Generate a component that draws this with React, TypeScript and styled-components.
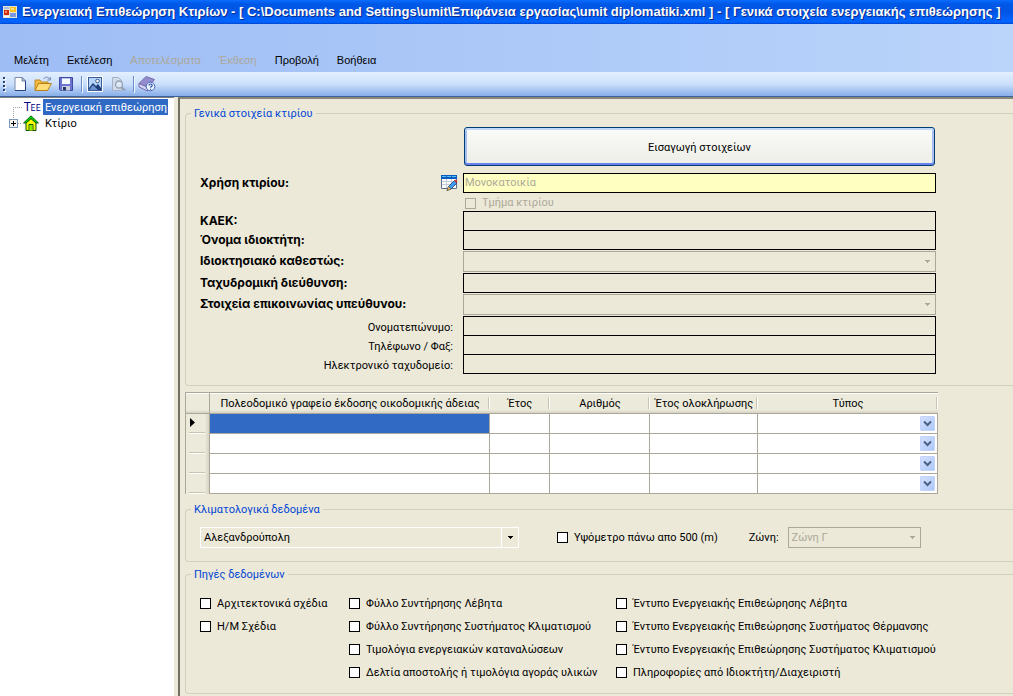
import React from "react";
import styled, { createGlobalStyle, css } from "styled-components";

const uiFont = `Roboto, "Liberation Sans", sans-serif`;
const menuFont = `"Liberation Sans", Arial, sans-serif`;

const Global = createGlobalStyle`
  * { box-sizing: border-box; }
  html, body, #root { height: 100%; }
  body {
    margin: 0;
    background: #ece9d8;
    color: #000;
    font: 11px/14px ${uiFont};
    overflow: hidden;
  }
  button, input, select { font: inherit; color: inherit; }
`;

const Window = styled.div`
  min-height: 100%;
  display: flex;
  flex-direction: column;
`;

const TitleBar = styled.header`
  height: 24px;
  flex: none;
  display: flex;
  align-items: center;
  gap: 4px;
  padding-left: 2px;
  background: linear-gradient(#0a6cff 0, #0058e6 4px, #0055e5 12px, #0262fb 19px, #0264ff 22px, #0046d0 24px);
  overflow: hidden;
`;

const Title = styled.h1`
  margin: 0;
  font: bold 13px/20px ${menuFont};
  color: #fff;
  text-shadow: 1px 1px #0a2a8c;
  white-space: pre;
`;

const MenuBar = styled.nav`
  height: 48px;
  flex: none;
  display: flex;
  align-items: flex-end;
  gap: 18px;
  padding: 0 14px 4px;
  background: linear-gradient(90deg, #9ebdf5, #bad4fa);
`;

const MenuItem = styled.button`
  padding: 0;
  border: 0;
  background: none;
  font: 11px/16px ${menuFont};
  white-space: nowrap;
  &:disabled { color: #aca899; }
`;

const ToolBar = styled.div`
  height: 25px;
  flex: none;
  display: flex;
  align-items: center;
  padding-left: 3px;
  border-bottom: 1px solid #3b619c;
  background: linear-gradient(#e3effe 0, #cbe0fc 12px, #8db2ea 23px);
`;

const Tool = styled.button`
  width: 23px;
  height: 22px;
  padding: 0;
  border: 0;
  background: none;
  display: grid;
  place-items: center;
`;

const Divider = styled.span`
  width: 1px;
  height: 16px;
  margin: 0 1px 0 4px;
  background: #6a8ccb;
  box-shadow: 1px 1px #f1f9ff;
`;

const Body = styled.div`
  flex: 1;
  display: flex;
  min-height: 0;
`;

const Sidebar = styled.aside`
  width: 174px;
  flex: none;
  padding: 1px 0 0 8px;
  background: #fff;
  border-top: 1px solid #808080;
`;

const Tree = styled.ul`
  margin: 0;
  padding: 0;
  list-style: none;
`;

const TreeRow = styled.li`
  height: 16px;
  display: flex;
  align-items: center;
`;

const TreeLabel = styled.span<{ $selected?: boolean }>`
  padding: 2px 1px 0 2px;
  font: 11px/14px ${uiFont};
  white-space: nowrap;
  ${(p) => p.$selected && css`background: #316ac5; color: #fff;`}
`;

const Content = styled.main`
  flex: 1;
  min-width: 0;
  margin-left: 4px;
  padding: 7px 0 0 5px;
  border: solid #716f64;
  border-width: 2px 0 0 2px;
  border-top-color: #8a8778;
`;

const Group = styled.fieldset`
  min-width: 0;
  margin: 0;
  padding: 0 77px 0 14px;
  border: 1px solid #d0d0bf;
  border-right: 0;
  border-radius: 4px 0 0 4px;
`;

const Legend = styled.legend`
  margin-left: -9px;
  padding: 0 3px;
  color: #0046d5;
  line-height: 15px;
`;

const Form = styled.div`
  height: 264px;
  padding-top: 6px;
  display: flex;
  flex-direction: column;
`;

const Row = styled.div<{ $h: number }>`
  height: ${(p) => p.$h}px;
  flex: none;
  display: grid;
  grid-template-columns: 263px minmax(0, 1fr);
  align-items: start;
`;

const Caption = styled.label`
  display: flex;
  align-items: center;
  justify-content: space-between;
  padding-right: 5px;
  font: bold 12px/20px Inter, "Noto Sans", sans-serif;
  white-space: nowrap;
`;

const SubCaption = styled.label`
  padding-right: 10px;
  line-height: 24px;
  text-align: right;
  white-space: nowrap;
`;

const BigButton = styled.button`
  height: 39px;
  margin: 0 1px;
  padding: 2px 0 0;
  border: 1px solid #003c74;
  border-radius: 3px;
  background: linear-gradient(#fbfbf9, #eceee6);
  box-shadow: inset 0 2px #c2d8f8, inset 0 -2px #6982ee, inset 2px 0 #a5c0f0, inset -2px 0 #a5c0f0;
`;

const TextBox = styled.input<{ $filled?: boolean }>`
  width: 100%;
  height: 20px;
  padding: 0 1px 1px;
  border: 1px solid #000;
  border-radius: 0;
  background: ${(p) => (p.$filled ? "#ffffc1" : "#ece9d8")};
  color: #aca899;
`;

const Check = styled.label<{ $disabled?: boolean }>`
  display: flex;
  align-items: center;
  gap: 6px;
  white-space: nowrap;
  color: ${(p) => (p.$disabled ? "#aca899" : "#000")};
  padding-left: ${(p) => (p.$disabled ? 2 : 0)}px;
`;

const Box = styled.input`
  appearance: none;
  width: 11px;
  height: 11px;
  margin: 0;
  border: 1px solid #000;
  background: #fff;
  &:disabled { border-color: #aca899; background: #ece9d8; }
  &:checked { background: #316ac5; }
`;

const SelectWrap = styled.div`
  position: relative;
  height: 21px;
  svg {
    position: absolute;
    top: 9px;
    right: 6px;
    pointer-events: none;
  }
`;

const Select = styled.select<{ $light?: boolean }>`
  appearance: none;
  width: 100%;
  height: 21px;
  padding: 0 20px 0 3px;
  border: 1px solid ${(p) => (p.$light ? "#fff" : "#aca899")};
  border-radius: 0;
  background: ${(p) =>
    p.$light ? "linear-gradient(#fff, #fff) right 16px top / 1px 100% no-repeat #ece9d8" : "#ece9d8"};
  opacity: 1;
  &:disabled { color: #aca899; }
`;

const Arrow = ({ color }: { color: string }) => (
  <svg width="5" height="3" viewBox="0 0 5 3" shapeRendering="crispEdges">
    <path d="M0 0h5v1h-1v1h-1v1h-1v-1h-1v-1h-1z" fill={color} />
  </svg>
);

const Grid = styled.table`
  width: calc(100% - 75px);
  margin: 6px 0 8px;
  table-layout: fixed;
  border-collapse: separate;
  border-spacing: 0;
  border: solid #aca899;
  border-width: 1px 0 0 1px;
`;

const Head = styled.th`
  position: relative;
  height: 21px;
  padding: 2px 0 0;
  font-weight: normal;
  border-bottom: 1px solid #aca899;
  background: linear-gradient(#fff 0 1px, #ebeadb 1px 17px, #d6d2c2 20px);
  &:first-child { border-right: 1px solid #aca899; }
  &:not(:first-child)::after {
    content: "";
    position: absolute;
    top: 4px;
    right: 0;
    width: 2px;
    height: 12px;
    background: linear-gradient(90deg, #c7c5b2 50%, #fff 50%);
  }
`;

const RowHead = styled.th`
  height: 20px;
  padding: 4px 0 0 4px;
  vertical-align: top;
  text-align: left;
  border-right: 1px solid #aca899;
  background:
    linear-gradient(#c7c5b2 50%, #fff 50%) 3px 100% / 16px 2px no-repeat,
    linear-gradient(90deg, #ebeadb 19px, #d6d2c2 23px);
  svg { display: block; }
`;

const Cell = styled.td<{ $selected?: boolean }>`
  height: 20px;
  padding: 0 2px 0 0;
  border: solid #aca899;
  border-width: 0 1px 1px 0;
  background: ${(p) => (p.$selected ? "#316ac5" : "#fff")};
`;

const DropButton = styled.button`
  display: grid;
  place-items: center;
  width: 15px;
  height: 15px;
  margin-left: auto;
  padding: 0;
  border: 1px solid #c3d3fd;
  border-radius: 1px;
  background: linear-gradient(135deg, #d3e0fe, #aec8f7);
`;

const Climate = styled.div`
  height: 44px;
  padding-top: 10px;
  display: flex;
  align-items: flex-start;
  & > :first-child { width: 319px; }
  & > :nth-child(2) { margin-left: 38px; height: 21px; }
`;

const Zone = styled.label`
  display: flex;
  align-items: center;
  gap: 9px;
  margin-left: 31px;
  & > div { width: 133px; }
`;

const Sources = styled.div`
  height: 111px;
  padding-top: 10px;
  display: grid;
  grid-template-columns: 149px 267px max-content;
  grid-auto-rows: 23px;
  align-items: center;
`;

const Item = styled(Check)<{ $col: number; $row: number }>`
  grid-column: ${(p) => p.$col};
  grid-row: ${(p) => p.$row};
`;

const Spacer = styled.div`
  height: 5px;
`;

const AppIcon = () => (
  <svg width="16" height="16" viewBox="0 0 16 16" shapeRendering="crispEdges">
    <rect x="1" y="2" width="14" height="12" fill="#e8e4d4" />
    <rect x="2" y="3" width="5" height="2" fill="#a8bce8" />
    <rect x="2" y="6" width="5" height="5" fill="#d02c10" />
    <rect x="3" y="7" width="2" height="2" fill="#f88c60" />
    <rect x="8" y="3" width="6" height="5" fill="#f8c020" />
    <rect x="9" y="4" width="3" height="2" fill="#ffe480" />
    <rect x="8" y="9" width="6" height="4" fill="#7898e0" />
    <rect x="2" y="12" width="5" height="1" fill="#fff" />
  </svg>
);

const Grip = () => (
  <svg width="5" height="16" viewBox="0 0 5 16" shapeRendering="crispEdges">
    {[1, 5, 9, 13].map((y) => (
      <g key={y}>
        <rect x="1" y={y + 1} width="2" height="2" fill="#fff" />
        <rect x="0" y={y} width="2" height="2" fill="#274176" />
      </g>
    ))}
  </svg>
);

const NewIcon = () => (
  <svg width="16" height="16" viewBox="0 0 16 16">
    <path d="M3 1.500h7l3.500 3.500v9.500h-10.500z" fill="#fff" stroke="#7c8cac" />
    <path d="M3 14.500h10.500v-9.500" fill="none" stroke="#27417c" />
    <path d="M10 1.500v3.500h3.500z" fill="#d4def0" stroke="#4c6090" strokeWidth="0.800" />
  </svg>
);

const OpenIcon = () => (
  <svg width="18" height="16" viewBox="0 0 18 16">
    <path d="M1 14v-10h5l1.500 2h6.500v8z" fill="#f0b840" stroke="#c08c28" />
    <path d="M1 14.500l3.500-7h13l-4 7z" fill="#ffdc78" stroke="#b88018" />
    <path d="M9.500 3c2-2.500 4.500-2.500 6 0m.800-2v3h-3" fill="none" stroke="#6c84ac" />
  </svg>
);

const SaveIcon = () => (
  <svg width="16" height="16" viewBox="0 0 16 16">
    <path d="M1.500 1.500h13v13h-12l-1-1z" fill="#6c74d0" stroke="#4048a0" />
    <rect x="4" y="2" width="8" height="6" fill="#f4f8ff" />
    <rect x="4" y="2" width="8" height="1" fill="#b8c4f0" />
    <rect x="4" y="10" width="8" height="4.500" fill="#c8d0e0" />
    <rect x="5" y="11" width="3" height="3.500" fill="#283468" />
  </svg>
);

const ImageIcon = () => (
  <svg width="16" height="16" viewBox="0 0 16 16">
    <rect width="16" height="16" fill="#fff" />
    <rect x="1.500" y="1.500" width="13" height="13" fill="#b4d4f8" stroke="#3c5c94" />
    <path d="M2 12l4-5 3 3 2-2 3 4v2h-12z" fill="#1c3c78" />
    <path d="M2 14l4-5 5 5z" fill="#6c94d0" />
    <circle cx="10.500" cy="5" r="1.800" fill="#fff" stroke="#1c3c78" strokeWidth="0.800" />
  </svg>
);

const PreviewIcon = () => (
  <svg width="16" height="16" viewBox="0 0 16 16">
    <path d="M2.500 1.500h6l3 3v10h-9z" fill="#d0dcec" stroke="#a4b0c4" />
    <circle cx="9" cy="8.500" r="3.500" fill="#dce8f4" stroke="#94a0b4" strokeWidth="1.300" />
    <path d="M11.500 11l3.500 3.500" stroke="#94a0b4" strokeWidth="2" />
  </svg>
);

const HelpIcon = () => (
  <svg width="18" height="16" viewBox="0 0 18 16">
    <path d="M1 7.500l7-7 8.500 3-6 8z" fill="#948ccc" stroke="#746cb0" />
    <path d="M1 7.500v3.500l8.500 4 1-3.500z" fill="#d4d0f0" stroke="#746cb0" />
    <circle cx="12.500" cy="10.500" r="4.300" fill="#eef4ff" stroke="#4468b8" />
    <path d="M11 9.500c0-2 3.200-2 3.200 0 0 1.200-1.600 1-1.600 2.200m0 1v1" fill="none" stroke="#2448a0" strokeWidth="1.200" />
  </svg>
);

const TableEditIcon = () => (
  <svg width="17" height="16" viewBox="0 0 17 16">
    <path d="M.5 1v12.500h15v-12.500" fill="#fff" stroke="#5c7090" />
    <path d="M1 6.500h14M1 9.500h14M5.500 4v9M10.500 4v9" stroke="#c4ccd8" />
    <rect y="0" width="16" height="4" fill="#0c5cc4" />
    <path d="M1 1.500h4M6 1.500h4M11 1.500h4" stroke="#5cc0fc" />
    <path d="M6 15.500l1.500-4 6-6 2.500 2.500-6 6z" fill="#3c9cf0" stroke="#1c3c7c" strokeWidth="0.800" />
    <path d="M13.200 5.500l1.300-1 2 2-1.200 1.500z" fill="#e42c1c" />
    <path d="M6 15.500l1.500-4 2.500 2.500z" fill="#f0c878" stroke="#7c5820" strokeWidth="0.600" />
  </svg>
);

const RootLines = () => (
  <svg width="14" height="16" viewBox="0 0 14 16" shapeRendering="crispEdges">
    <path d="M5.500 8v8M5 8.500h9" fill="none" stroke="#a0a0a0" strokeDasharray="1 1" />
  </svg>
);

const NodeLines = () => (
  <svg width="14" height="16" viewBox="0 0 14 16" shapeRendering="crispEdges">
    <path d="M5.500 0v4M10 8.500h4" fill="none" stroke="#a0a0a0" strokeDasharray="1 1" />
    <rect x="1.500" y="4.500" width="8" height="8" fill="#f4f3ee" stroke="#7898b5" />
    <path d="M3 8.500h5M5.500 6v5" stroke="#000" />
  </svg>
);

const TeeMark = styled.span`
  width: 21px;
  padding-left: 2px;
  font: 12px/16px "Liberation Sans Narrow", "DejaVu Sans Condensed", sans-serif;
  color: #000080;
  small { font-size: 9px; }
`;

const HouseIcon = () => (
  <svg width="21" height="16" viewBox="0 0 21 16">
    <path d="M4 8l5-4.500 5 4.500v7.500h-10z" fill="#ffff00" stroke="#005000" />
    <path d="M9 .8l7.500 7.200h-2.500l-5-4.500-5 4.500h-2.500z" fill="#00e000" stroke="#004000" strokeWidth="0.800" />
    <path d="M7 15.500v-6h4v6" fill="#ffff00" stroke="#006000" />
    <path d="M9 10v5" stroke="#00e000" />
  </svg>
);

const RowMarker = () => (
  <svg width="5" height="9" viewBox="0 0 5 9">
    <path d="M0 0l5 4.500-5 4.500z" />
  </svg>
);

const Chevron = () => (
  <svg width="9" height="7" viewBox="0 0 9 7">
    <path d="M1 1.500l3.500 3.500 3.500-3.500" fill="none" stroke="#4d6185" strokeWidth="2" />
  </svg>
);

const sources: [number, number, string][] = [
  [1, 1, "Αρχιτεκτονικά σχέδια"],
  [1, 2, "Η/Μ Σχέδια"],
  [2, 1, "Φύλλο Συντήρησης Λέβητα"],
  [2, 2, "Φύλλο Συντήρησης Συστήματος Κλιματισμού"],
  [2, 3, "Τιμολόγια ενεργειακών καταναλώσεων"],
  [2, 4, "Δελτία αποστολής ή τιμολόγια αγοράς υλικών"],
  [3, 1, "Έντυπο Ενεργειακής Επιθεώρησης Λέβητα"],
  [3, 2, "Έντυπο Ενεργειακής Επιθεώρησης Συστήματος Θέρμανσης"],
  [3, 3, "Έντυπο Ενεργειακής Επιθεώρησης Συστήματος Κλιματισμού"],
  [3, 4, "Πληροφορίες από Ιδιοκτήτη/Διαχειριστή"],
];

export default function App() {
  return (
    <Window>
      <Global />
      <TitleBar>
        <AppIcon />
        <Title>
          {"Ενεργειακή Επιθεώρηση Κτιρίων - [ C:\\Documents and Settings\\umit\\Επιφάνεια εργασίας\\umit diplomatiki.xml ] - [ Γενικά στοιχεία ενεργειακής επιθεώρησης ]"}
        </Title>
      </TitleBar>
      <MenuBar>
        <MenuItem>Μελέτη</MenuItem>
        <MenuItem>Εκτέλεση</MenuItem>
        <MenuItem disabled>Αποτελέσματα</MenuItem>
        <MenuItem disabled>Έκθεση</MenuItem>
        <MenuItem>Προβολή</MenuItem>
        <MenuItem>Βοήθεια</MenuItem>
      </MenuBar>
      <ToolBar>
        <Grip />
        <Tool aria-label="Νέο"><NewIcon /></Tool>
        <Tool aria-label="Άνοιγμα"><OpenIcon /></Tool>
        <Tool aria-label="Αποθήκευση"><SaveIcon /></Tool>
        <Divider />
        <Tool aria-label="Εικόνα"><ImageIcon /></Tool>
        <Tool aria-label="Προεπισκόπηση" disabled><PreviewIcon /></Tool>
        <Divider />
        <Tool aria-label="Βοήθεια"><HelpIcon /></Tool>
      </ToolBar>
      <Body>
        <Sidebar>
          <Tree>
            <TreeRow>
              <RootLines />
              <TeeMark>T<small>EE</small></TeeMark>
              <TreeLabel $selected>Ενεργειακή επιθεώρηση</TreeLabel>
            </TreeRow>
            <TreeRow>
              <NodeLines />
              <HouseIcon />
              <TreeLabel>Κτίριο</TreeLabel>
            </TreeRow>
          </Tree>
        </Sidebar>
        <Content>
          <Group>
            <Legend>Γενικά στοιχεία κτιρίου</Legend>
            <Form>
              <Row $h={46}>
                <span />
                <BigButton>Εισαγωγή στοιχείων</BigButton>
              </Row>
              <Row $h={23}>
                <Caption htmlFor="use">Χρήση κτιρίου:<TableEditIcon /></Caption>
                <TextBox id="use" $filled disabled defaultValue="Μονοκατοικία" />
              </Row>
              <Row $h={15}>
                <span />
                <Check $disabled><Box type="checkbox" disabled />Τμήμα κτιρίου</Check>
              </Row>
              <Row $h={19}>
                <Caption htmlFor="kaek">ΚΑΕΚ:</Caption>
                <TextBox id="kaek" disabled />
              </Row>
              <Row $h={21}>
                <Caption htmlFor="owner">Όνομα ιδιοκτήτη:</Caption>
                <TextBox id="owner" disabled />
              </Row>
              <Row $h={22}>
                <Caption htmlFor="status">Ιδιοκτησιακό καθεστώς:</Caption>
                <SelectWrap><Select id="status" disabled /><Arrow color="#aca899" /></SelectWrap>
              </Row>
              <Row $h={21}>
                <Caption htmlFor="address">Ταχυδρομική διεύθυνση:</Caption>
                <TextBox id="address" disabled />
              </Row>
              <Row $h={22}>
                <Caption htmlFor="contact">Στοιχεία επικοινωνίας υπεύθυνου:</Caption>
                <SelectWrap><Select id="contact" disabled /><Arrow color="#aca899" /></SelectWrap>
              </Row>
              <Row $h={19}>
                <SubCaption htmlFor="name">Ονοματεπώνυμο:</SubCaption>
                <TextBox id="name" disabled />
              </Row>
              <Row $h={19}>
                <SubCaption htmlFor="phone">Τηλέφωνο / Φαξ:</SubCaption>
                <TextBox id="phone" disabled />
              </Row>
              <Row $h={20}>
                <SubCaption htmlFor="mail">Ηλεκτρονικό ταχυδομείο:</SubCaption>
                <TextBox id="mail" disabled />
              </Row>
            </Form>
          </Group>
          <Grid>
            <colgroup>
              <col style={{ width: 24 }} />
              <col style={{ width: 280 }} />
              <col style={{ width: 60 }} />
              <col style={{ width: 100 }} />
              <col style={{ width: 108 }} />
              <col />
            </colgroup>
            <thead>
              <tr>
                <Head />
                <Head>Πολεοδομικό γραφείο έκδοσης οικοδομικής άδειας</Head>
                <Head>Έτος</Head>
                <Head>Αριθμός</Head>
                <Head>Έτος ολοκλήρωσης</Head>
                <Head>Τύπος</Head>
              </tr>
            </thead>
            <tbody>
              {[0, 1, 2, 3].map((row) => (
                <tr key={row}>
                  <RowHead>{row === 0 && <RowMarker />}</RowHead>
                  <Cell $selected={row === 0} />
                  <Cell />
                  <Cell />
                  <Cell />
                  <Cell><DropButton aria-label="Τύπος"><Chevron /></DropButton></Cell>
                </tr>
              ))}
            </tbody>
          </Grid>
          <Group>
            <Legend>Κλιματολογικά δεδομένα</Legend>
            <Climate>
              <SelectWrap>
                <Select $light aria-label="Περιοχή"><option>Αλεξανδρούπολη</option></Select>
                <Arrow color="#000" />
              </SelectWrap>
              <Check><Box type="checkbox" />Υψόμετρο πάνω απο 500 (m)</Check>
              <Zone>
                Ζώνη:
                <SelectWrap>
                  <Select disabled><option>Ζώνη Γ</option></Select>
                  <Arrow color="#aca899" />
                </SelectWrap>
              </Zone>
            </Climate>
          </Group>
          <Spacer />
          <Group>
            <Legend>Πηγές δεδομένων</Legend>
            <Sources>
              {sources.map(([col, row, text]) => (
                <Item key={text} $col={col} $row={row}><Box type="checkbox" />{text}</Item>
              ))}
            </Sources>
          </Group>
        </Content>
      </Body>
    </Window>
  );
}
